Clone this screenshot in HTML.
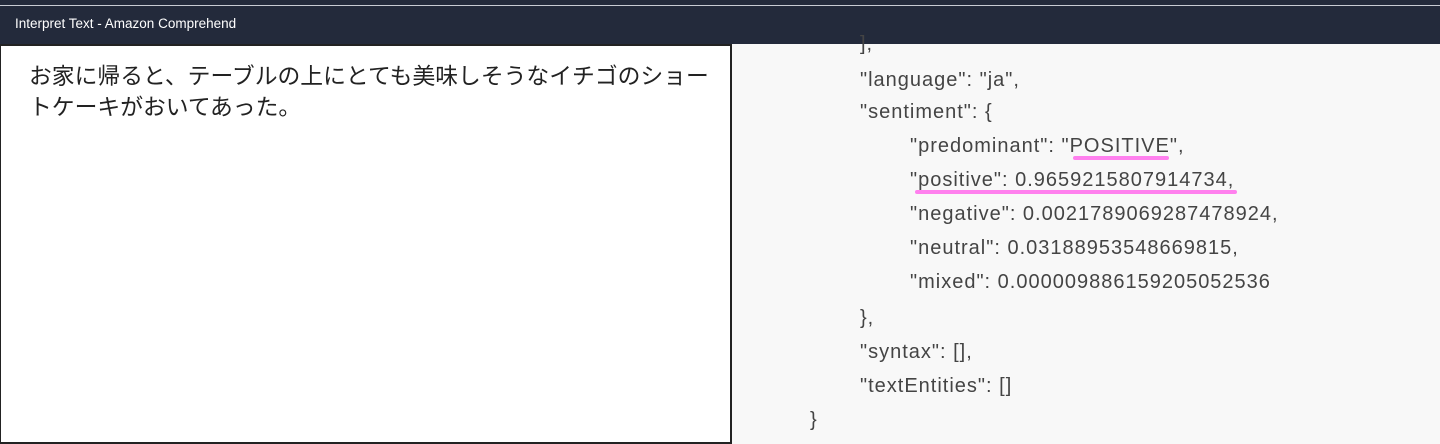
<!DOCTYPE html>
<html><head><meta charset="utf-8"><style>
*{margin:0;padding:0;box-sizing:border-box}
body{width:1440px;height:435px;overflow:hidden;background:#f8f8f8;position:relative;font-family:"Liberation Sans","Noto Sans CJK JP",sans-serif}
.top{position:absolute;left:0;top:0;width:1440px;height:5px;background:#232a3b}
.line{position:absolute;left:0;top:5px;width:1440px;height:1px;background:#c8ccd4}
.hdr{position:absolute;left:0;top:6px;width:1440px;height:38px;background:#232a3b;color:#fff;font-size:13.5px;line-height:36px;padding-left:15px}
.box{position:absolute;left:0;top:44px;width:732px;height:400px;background:#fff;border:2px solid #222;border-left:1px solid #222}
.jp{position:absolute;left:29px;top:61px;width:700px;font-size:22.8px;line-height:31px;color:#222;font-family:"Liberation Sans","Noto Sans CJK JP",sans-serif}
.j{position:absolute;font-size:20px;letter-spacing:1px;color:#444;white-space:pre;line-height:24px}
.u{position:absolute;height:4px;background:#ff80ee;border-radius:2px}
</style></head><body>
<div class="top"></div><div class="line"></div>
<div class="hdr">Interpret Text - Amazon Comprehend</div>
<div class="box"></div>
<div class="jp">お家に帰ると、テーブルの上にとても美味しそうなイチゴのショートケーキがおいてあった。</div>
<div class="j" style="left:860px;top:32px">],</div>
<div class="j" style="left:860px;top:68px">"language": "ja",</div>
<div class="j" style="left:860px;top:100px">"sentiment": {</div>
<div class="j" style="left:910px;top:134px">"predominant": "POSITIVE",</div>
<div class="j" style="left:910px;top:168px">"positive": 0.9659215807914734,</div>
<div class="j" style="left:910px;top:202px">"negative": 0.0021789069287478924,</div>
<div class="j" style="left:910px;top:236px">"neutral": 0.03188953548669815,</div>
<div class="j" style="left:910px;top:270px">"mixed": 0.000009886159205052536</div>
<div class="j" style="left:860px;top:306px">},</div>
<div class="j" style="left:860px;top:340px">"syntax": [],</div>
<div class="j" style="left:860px;top:374px">"textEntities": []</div>
<div class="j" style="left:810px;top:408px">}</div>
<div class="u" style="left:1073px;top:156px;width:96px"></div>
<div class="u" style="left:915px;top:190px;width:322px"></div>
</body></html>
